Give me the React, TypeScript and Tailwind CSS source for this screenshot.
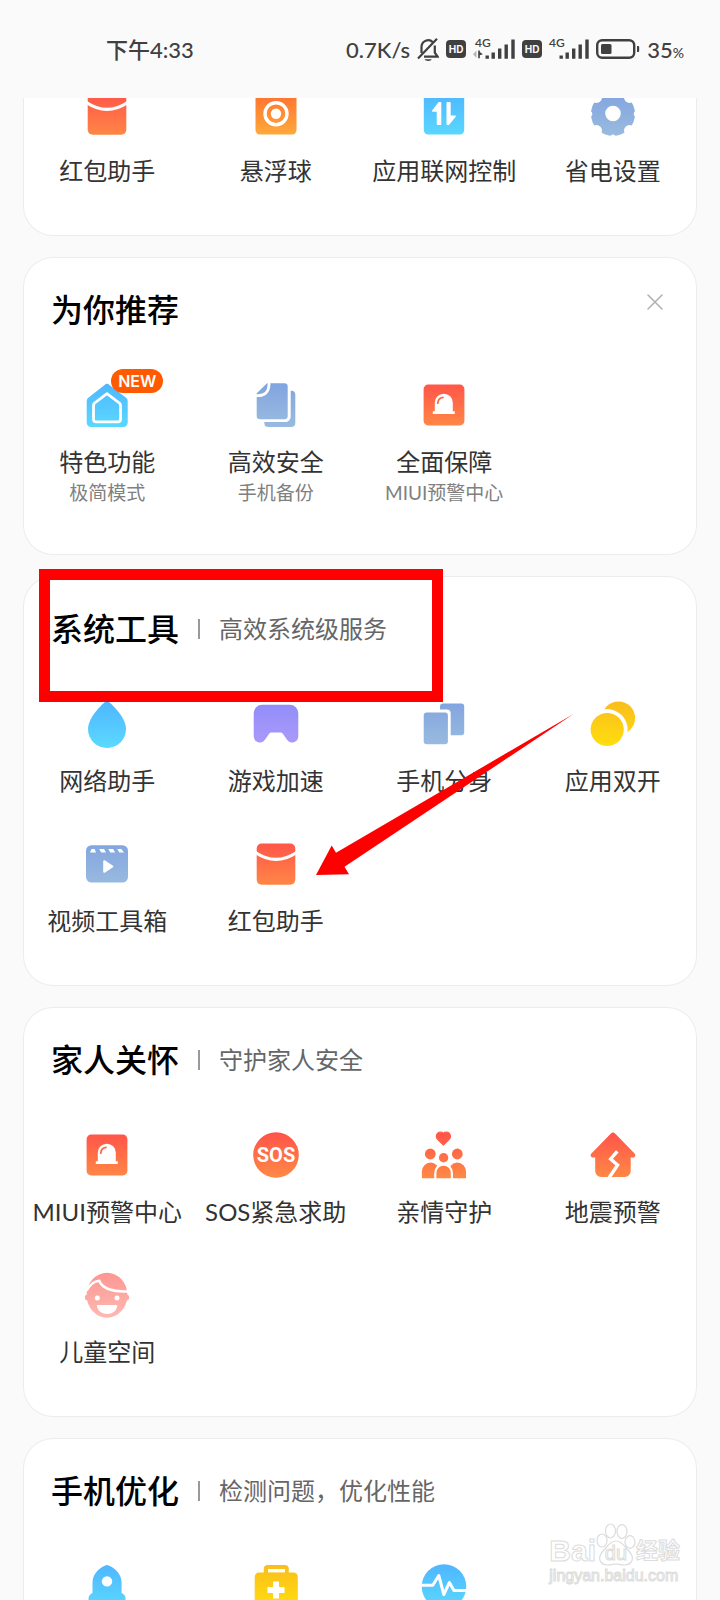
import type { ReactNode } from 'react';

interface Tool {
  label: string;
  icon: ReactNode;
  hint?: string;
  isNew?: boolean;
}

const gradients = [
  { id: 'red', from: '#ff5449', to: '#ff8846' },
  { id: 'orange', from: '#ff6f30', to: '#ffab3a' },
  { id: 'sky', from: '#4fb6ff', to: '#5ad8ff' },
  { id: 'slate', from: '#82a4e0', to: '#99bbdf' },
  { id: 'purple', from: '#918cfa', to: '#ab9bf9' },
  { id: 'yellow', from: '#fabd1c', to: '#ffde0e' },
  { id: 'pink', from: '#fd9693', to: '#fdb9b1' },
];

function Gradients() {
  return (
    <svg className="absolute h-0 w-0" aria-hidden="true">
      <defs>
        {gradients.map((g) => (
          <linearGradient key={g.id} id={g.id} gradientUnits="userSpaceOnUse" x1="0" y1="2" x2="0" y2="46">
            <stop offset="0" stopColor={g.from} />
            <stop offset="1" stopColor={g.to} />
          </linearGradient>
        ))}
      </defs>
    </svg>
  );
}

function Icon({ children }: { children: ReactNode }) {
  return (
    <svg viewBox="0 0 48 48" className="h-12 w-12" fill="none" aria-hidden="true">
      {children}
    </svg>
  );
}

const envelope = (
  <Icon>
    <rect x="4.7" y="3.5" width="38.6" height="41.2" rx="5" fill="url(#red)" />
    <path d="M3 12.2Q24 26.5 45 12.2" stroke="#fff" strokeWidth="3.2" />
  </Icon>
);

const floatBall = (
  <Icon>
    <rect x="3.5" y="3.5" width="41" height="41" rx="4.5" fill="url(#orange)" />
    <circle cx="24" cy="23.7" r="11" stroke="#fff" strokeWidth="3.4" />
    <circle cx="24" cy="23.7" r="5.2" fill="#fff" />
  </Icon>
);

const traffic = (
  <Icon>
    <rect x="3.8" y="3.5" width="40.4" height="41" rx="4.5" fill="url(#sky)" />
    <path
      d="M19 12.8h1.6v21.4h-3.2V21H12.7zM27.2 12.8h2.8v13.4h5.2l-6.6 8h-1.4z"
      fill="#fff"
      stroke="#fff"
      strokeWidth="1.4"
      strokeLinejoin="round"
    />
  </Icon>
);

const gear = (
  <Icon>
    <circle cx="24" cy="24" r="22" fill="url(#slate)" />
    {[0, 90, 180, 270].map((a) => (
      <g key={a} transform={`rotate(${a} 24 24)`} fill="#fff">
        <circle cx="24" cy="1" r="2.4" />
        <circle cx="40.6" cy="7.4" r="5.6" />
      </g>
    ))}
    <circle cx="24" cy="23.5" r="7.8" fill="#fff" />
  </Icon>
);

const home = (
  <Icon>
    <path
      d="M21.6 4a3.4 3.4 0 0 1 4.8 0l16.4 12.6a4.6 4.6 0 0 1 1.9 3.7v21.5a4.2 4.2 0 0 1-4.2 4.2H7.9a4.2 4.2 0 0 1-4.2-4.2V20.3a4.6 4.6 0 0 1 1.9-3.7z"
      fill="url(#sky)"
    />
    <path
      d="M24 12.6l12.3 9.4a2.6 2.6 0 0 1 1.2 2.2v14a2.6 2.6 0 0 1-2.6 2.6H13.1a2.6 2.6 0 0 1-2.6-2.6v-14a2.6 2.6 0 0 1 1.2-2.2z"
      stroke="#fff"
      strokeWidth="2.8"
      strokeLinejoin="round"
    />
  </Icon>
);

const backup = (
  <Icon>
    <rect x="12.3" y="9.7" width="31" height="36.3" rx="4" fill="url(#slate)" />
    <rect x="1.7" y="-1" width="37" height="42" rx="5.5" fill="#fff" />
    <path d="M15 2.2h17.5a3.2 3.2 0 0 1 3.2 3.2V35a3.2 3.2 0 0 1-3.2 3.2H8A3.3 3.3 0 0 1 4.7 35V12.3z" fill="url(#slate)" />
    <path d="M17 1v2.6c0 6.8-4.2 11-11 11H3.5" stroke="#fff" strokeWidth="2.8" />
  </Icon>
);

const siren = (
  <Icon>
    <rect x="3.6" y="3.6" width="40.8" height="40.8" rx="4.5" fill="url(#red)" />
    <path d="M14.8 30.3V21.7a9 9 0 0 1 18 0v8.6h2v2.6h-22v-2.6z" fill="#fff" />
    <path d="M17.8 22.2c.2-3.3 2-5.4 5.2-5.9" stroke="#ff6a49" strokeWidth="1.8" strokeLinecap="round" />
  </Icon>
);

const drop = (
  <Icon>
    <path d="M24 .8C25.6 .8 43 16.5 43 29a19 19 0 0 1-38 0C5 16.5 22.4 .8 24 .8z" fill="url(#sky)" />
  </Icon>
);

const gamepad = (
  <Icon>
    <path
      d="M10.2 4.8h27.6a8.5 8.5 0 0 1 8.5 8.5v23a6.2 6.2 0 0 1-11.3 3.5l-4.3-6.2q-.8-1.1-2.2-1.1h-9q-1.4 0-2.2 1.1L13 39.8A6.2 6.2 0 0 1 1.7 36.3v-23a8.5 8.5 0 0 1 8.5-8.5z"
      fill="url(#purple)"
    />
  </Icon>
);

const clone = (
  <Icon>
    <rect x="20" y="3.5" width="24.2" height="31.7" rx="3" fill="url(#slate)" />
    <rect x="0.7" y="9.6" width="30" height="38" rx="4" fill="#fff" />
    <rect x="3.7" y="12.5" width="24.2" height="31.8" rx="3" fill="url(#slate)" />
  </Icon>
);

const dualApps = (
  <Icon>
    <circle cx="29.5" cy="18" r="16.6" fill="url(#yellow)" />
    <circle cx="18.2" cy="29.5" r="20.4" fill="#fff" />
    <circle cx="18.2" cy="29.5" r="16.6" fill="url(#yellow)" />
  </Icon>
);

const video = (
  <Icon>
    <rect x="3" y="5.2" width="42" height="37.4" rx="5.5" fill="url(#slate)" />
    <path d="M8.6 9h3l1.5 3.6H7zM16.2 9h4.8l2 3.6h-4.8zM25.3 9h4.8l2 3.6h-4.8zM34.3 9h4l2.7 3.6h-4.7z" fill="#fff" />
    <path d="M21.2 21.2v10.6l8.2-5.3z" fill="#fff" stroke="#fff" strokeWidth="2" strokeLinejoin="round" />
  </Icon>
);

const sos = (
  <Icon>
    <circle cx="24" cy="24" r="22.8" fill="url(#red)" />
    <text x="24" y="31" textAnchor="middle" fill="#fff" className="font-['Roboto',sans-serif] text-[20px] font-bold">
      SOS
    </text>
  </Icon>
);

const family = (
  <Icon>
    <path
      d="M23.4 14l-5.8-5.7a4.1 4.1 0 0 1 5.8-5.9 4.1 4.1 0 0 1 5.8 5.9z"
      fill="url(#red)"
      stroke="url(#red)"
      strokeWidth="1.2"
      strokeLinejoin="round"
    />
    <circle cx="10.3" cy="23" r="5.4" fill="url(#red)" />
    <circle cx="37.3" cy="23" r="5.4" fill="url(#red)" />
    <path d="M1.9 47.3V40.3a8.7 8.7 0 0 1 17.4 0v7zM28.6 47.3v-7a8.7 8.7 0 0 1 17.4 0v7z" fill="url(#red)" />
    <circle cx="23.6" cy="26.7" r="6.4" fill="#fff" />
    <path d="M14.2 48V42a9.4 9.4 0 0 1 18.8 0v6z" fill="#fff" />
    <circle cx="23.6" cy="26.7" r="4.7" fill="url(#red)" />
    <path d="M16.4 47.3V41.9a7.2 7.2 0 0 1 14.4 0v5.4z" fill="url(#red)" />
  </Icon>
);

const quake = (
  <Icon>
    <path
      d="M21.7 2.7a3.3 3.3 0 0 1 4.6 0l19.3 19.8c1.5 1.7.6 4-1.6 4h-2.3v13.7a5.8 5.8 0 0 1-5.8 5.8H12a5.8 5.8 0 0 1-5.8-5.8V26.5H4c-2.2 0-3.1-2.3-1.6-4z"
      fill="url(#red)"
    />
    <path d="M28.3 20.3L21.6 28l7 6-9 13.5" stroke="#fff" strokeWidth="3.4" />
  </Icon>
);

const child = (
  <Icon>
    <ellipse cx="24" cy="24.2" rx="20.4" ry="22.5" fill="url(#pink)" />
    <circle cx="4.8" cy="26.6" r="3" fill="url(#pink)" />
    <circle cx="43.2" cy="26.6" r="3" fill="url(#pink)" />
    <path d="M3.5 19.5C7 13.5 11 10.3 16.2 9.8c2.8 7.2 13 11.7 29.8 10.4" stroke="#fff" strokeWidth="2.6" />
    <circle cx="14.3" cy="27" r="2.5" fill="#fff" />
    <circle cx="34" cy="27" r="2.5" fill="#fff" />
    <path d="M14.6 34h19q.8 0 .7.9c-1 5.2-5 8-10.2 8s-9.2-2.8-10.2-8q-.1-.9.7-.9z" fill="#fff" />
  </Icon>
);

const rocket = (
  <Icon>
    <path
      d="M24 3c6 1.5 14.6 8 14.6 17.5V31c2.5 1 4 3 4 6v9H5.5v-9c0-3 1.5-5 4-6V20.5C9.5 11 18 4.5 24 3z"
      fill="url(#sky)"
    />
    <circle cx="24" cy="19.4" r="5.2" fill="#fff" />
  </Icon>
);

const medkit = (
  <Icon>
    <path
      d="M15.5 3h17.3a4 4 0 0 1 4 4v3.6h4.7a4.3 4.3 0 0 1 4.3 4.3V42a4.3 4.3 0 0 1-4.3 4.3H7A4.3 4.3 0 0 1 2.7 42V14.9A4.3 4.3 0 0 1 7 10.6h4.8V7a4 4 0 0 1 3.7-4z"
      fill="url(#yellow)"
    />
    <path d="M16 7h17v3.4H16z" fill="#fff" />
    <path d="M24 19.6v17M15.5 28.1h17" stroke="#fff" strokeWidth="6" />
  </Icon>
);

const pulse = (
  <Icon>
    <circle cx="24" cy="24.5" r="22.3" fill="url(#sky)" />
    <path
      d="M0 23.3h12.8L18.8 13.5l5 19 5.6-12 4.5 8H48"
      stroke="#fff"
      strokeWidth="3"
      strokeLinejoin="round"
    />
  </Icon>
);

const shortcuts: Tool[] = [
  { label: '红包助手', icon: envelope },
  { label: '悬浮球', icon: floatBall },
  { label: '应用联网控制', icon: traffic },
  { label: '省电设置', icon: gear },
];

const recommended: Tool[] = [
  { label: '特色功能', hint: '极简模式', icon: home, isNew: true },
  { label: '高效安全', hint: '手机备份', icon: backup },
  { label: '全面保障', hint: 'MIUI预警中心', icon: siren },
];

const systemTools: Tool[] = [
  { label: '网络助手', icon: drop },
  { label: '游戏加速', icon: gamepad },
  { label: '手机分身', icon: clone },
  { label: '应用双开', icon: dualApps },
  { label: '视频工具箱', icon: video },
  { label: '红包助手', icon: envelope },
];

const familyCare: Tool[] = [
  { label: 'MIUI预警中心', icon: siren },
  { label: 'SOS紧急求助', icon: sos },
  { label: '亲情守护', icon: family },
  { label: '地震预警', icon: quake },
  { label: '儿童空间', icon: child },
];

const optimize = [
  { name: '手机加速', icon: rocket },
  { name: '问题检测', icon: medkit },
  { name: '性能优化', icon: pulse },
];

function ToolGrid({ tools }: { tools: Tool[] }) {
  return (
    <div className="grid grid-cols-4 gap-y-[42px]">
      {tools.map((tool) => (
        <button key={tool.label} type="button" className="flex flex-col items-center whitespace-nowrap">
          <span className="relative mb-4">
            {tool.icon}
            {tool.isNew && (
              <span className="absolute -top-3 left-7 h-6 w-[52px] rounded-full bg-[#ff5a00] text-center font-['Inter',sans-serif] text-base leading-6 font-semibold text-white">
                NEW
              </span>
            )}
          </span>
          <span className="text-2xl leading-[34px] text-[#333]">{tool.label}</span>
          {tool.hint && <span className="text-[19px] leading-7 text-[#808080]">{tool.hint}</span>}
        </button>
      ))}
    </div>
  );
}

function Card({ children }: { children: ReactNode }) {
  return (
    <section className="relative rounded-[30px] bg-white pb-12 inset-ring inset-ring-[#ececec] first:rounded-t-none">
      {children}
    </section>
  );
}

function CardHeader({ title, subtitle }: { title: string; subtitle?: string }) {
  return (
    <div className="flex items-start justify-between px-7 pt-[29px] pb-[47px]">
      <div className="flex h-12 items-center">
        <h2 className="text-[32px] leading-[48px] font-medium text-black">{title}</h2>
        {subtitle && (
          <>
            <span className="mx-[19px] h-5 w-0.5 bg-[#999]" />
            <p className="text-2xl text-[#666]">{subtitle}</p>
          </>
        )}
      </div>
      {!subtitle && (
        <button type="button" aria-label="关闭" className="flex h-8 w-7 items-center justify-center">
          <svg viewBox="0 0 16 16" className="h-4 w-4" stroke="#b0b0b0" strokeWidth="1.5" strokeLinecap="round">
            <path d="M1 1l14 14M15 1L1 15" />
          </svg>
        </button>
      )}
    </div>
  );
}

function HdBadge() {
  return (
    <span className="h-[18px] w-5 rounded-[4px] bg-[#404040] text-center font-['Inter',sans-serif] text-[10px] leading-[18px] font-bold text-[#fafafa]">
      HD
    </span>
  );
}

const signalBars = (
  <path d="M12.5 18.5h3.4v3.2h-3.4zM18.5 15.5h3.4v6.2h-3.4zM25 11.5h3.4v10.2H25zM31.5 7.5h3.4v14.2h-3.4zM38.3 2.5h3.4v19.2h-3.4z" />
);

// the SIM that carries data has the small traffic arrows under its network type
function DataSignal() {
  return (
    <svg viewBox="0 0 42 24" className="h-6 w-[42px] overflow-visible" fill="#404040">
      <text x="2" y="10" className="font-['Lato',sans-serif] text-[12px] font-semibold">
        4G
      </text>
      {signalBars}
      <path d="M3.5 13.5v7.5L0 17.2z" fill="#b5b5b5" />
      <path d="M5.2 13.5h1.6v1.5l3 2.2-3 1v3H5.2z" />
    </svg>
  );
}

function Signal() {
  return (
    <svg viewBox="2 0 40 24" className="h-6 w-10 overflow-visible" fill="#404040">
      <text x="2" y="10" className="font-['Lato',sans-serif] text-[12px] font-semibold">
        4G
      </text>
      {signalBars}
    </svg>
  );
}

function StatusBar() {
  return (
    <header className="flex h-[98px] shrink-0 items-center justify-between pr-9 pl-[106px] text-[22px] font-medium text-[#404040]">
      <time>下午4:33</time>
      <div className="flex items-center gap-[7px]">
        <span>0.7K/s</span>
        <svg viewBox="0 0 22 24" className="h-6 w-[22px]" fill="none" stroke="#404040" strokeWidth="2.2">
          <path d="M4.5 16V9.8a6.7 6.7 0 0 1 11.4-4.6M17.8 8.5v7.2l2.8 4H7" />
          <path d="M1 21.5L20 1.8" />
          <path d="M7.5 22.3h7.4a3.8 2.2 0 0 1-7.4 0z" fill="#404040" stroke="none" />
        </svg>
        <HdBadge />
        <DataSignal />
        <HdBadge />
        <Signal />
        <svg viewBox="0 0 44 20" className="h-5 w-11" fill="none">
          <rect x="1.2" y="1.2" width="37" height="17.6" rx="5" stroke="#404040" strokeWidth="2.4" />
          <rect x="5" y="5" width="10.5" height="10" rx="1.5" fill="#404040" />
          <path d="M41 7h1.2a1 1 0 0 1 1 1v4a1 1 0 0 1-1 1H41z" fill="#404040" />
        </svg>
        <span>
          35<span className="text-sm">%</span>
        </span>
      </div>
    </header>
  );
}

function Watermark() {
  return (
    <div className="pointer-events-none absolute right-10 bottom-[15px] font-['Liberation_Sans','Noto_Sans_CJK_SC',sans-serif] font-bold text-white [-webkit-text-stroke:1px_#dcdcdc]">
      <div className="flex items-end justify-between">
        <span className="text-[30px] leading-8">Bai</span>
        <span className="relative h-11 w-10 text-center">
          <svg viewBox="0 0 40 44" className="absolute inset-0" fill="#fff" stroke="#dcdcdc" strokeWidth="1.2">
            <ellipse cx="6" cy="17.5" rx="5" ry="6.5" />
            <ellipse cx="14.5" cy="8" rx="5" ry="7" />
            <ellipse cx="26" cy="8.5" rx="5" ry="6.8" />
            <ellipse cx="34" cy="19" rx="5" ry="6.3" />
            <path d="M20 18c6 0 8 5 12 9 8 8 4 15-4 15-4 0-5-1-8-1s-4 1-8 1c-8 0-12-7-4-15 4-4 6-9 12-9z" />
          </svg>
          <span className="relative top-5 text-xl leading-5 font-normal">du</span>
        </span>
        <span className="text-[22px] leading-8">经验</span>
      </div>
      <div className="text-base leading-[18px] font-normal">jingyan.baidu.com</div>
    </div>
  );
}

export default function App() {
  return (
    <div className="relative flex h-screen flex-col overflow-hidden bg-[#fafafa] font-['Lato','Noto_Sans_CJK_SC',sans-serif]">
      <Gradients />
      <StatusBar />

      <main className="min-h-0 flex-1 overflow-hidden px-[23px]">
        {/* the list is scrolled, so the first card is cut by the status bar */}
        <div className="-mt-2 flex flex-col gap-[21px]">
          <Card>
            <ToolGrid tools={shortcuts} />
          </Card>

          <Card>
            <CardHeader title="为你推荐" />
            <ToolGrid tools={recommended} />
          </Card>

          <Card>
            <CardHeader title="系统工具" subtitle="高效系统级服务" />
            <ToolGrid tools={systemTools} />
            {/* Highlight frame and arrow */}
            <div className="pointer-events-none absolute -top-[7px] left-4 h-[133px] w-[404px] border-[11px] border-[#ff0000]" />
            <svg
              viewBox="0 0 258 162"
              className="pointer-events-none absolute top-[138px] left-[293px] h-[162px] w-[258px]"
              fill="#ff0000"
            >
              <path d="M0 161L15.7 131.5l4.3 7.2L257.5 0 28.5 152.7l4.5 7.5z" />
            </svg>
          </Card>

          <Card>
            <CardHeader title="家人关怀" subtitle="守护家人安全" />
            <ToolGrid tools={familyCare} />
          </Card>

          <Card>
            <CardHeader title="手机优化" subtitle="检测问题，优化性能" />
            <div className="grid grid-cols-4">
              {optimize.map((item) => (
                <button key={item.name} type="button" aria-label={item.name} className="flex justify-center">
                  {item.icon}
                </button>
              ))}
            </div>
          </Card>
        </div>
      </main>

      <Watermark />
    </div>
  );
}
